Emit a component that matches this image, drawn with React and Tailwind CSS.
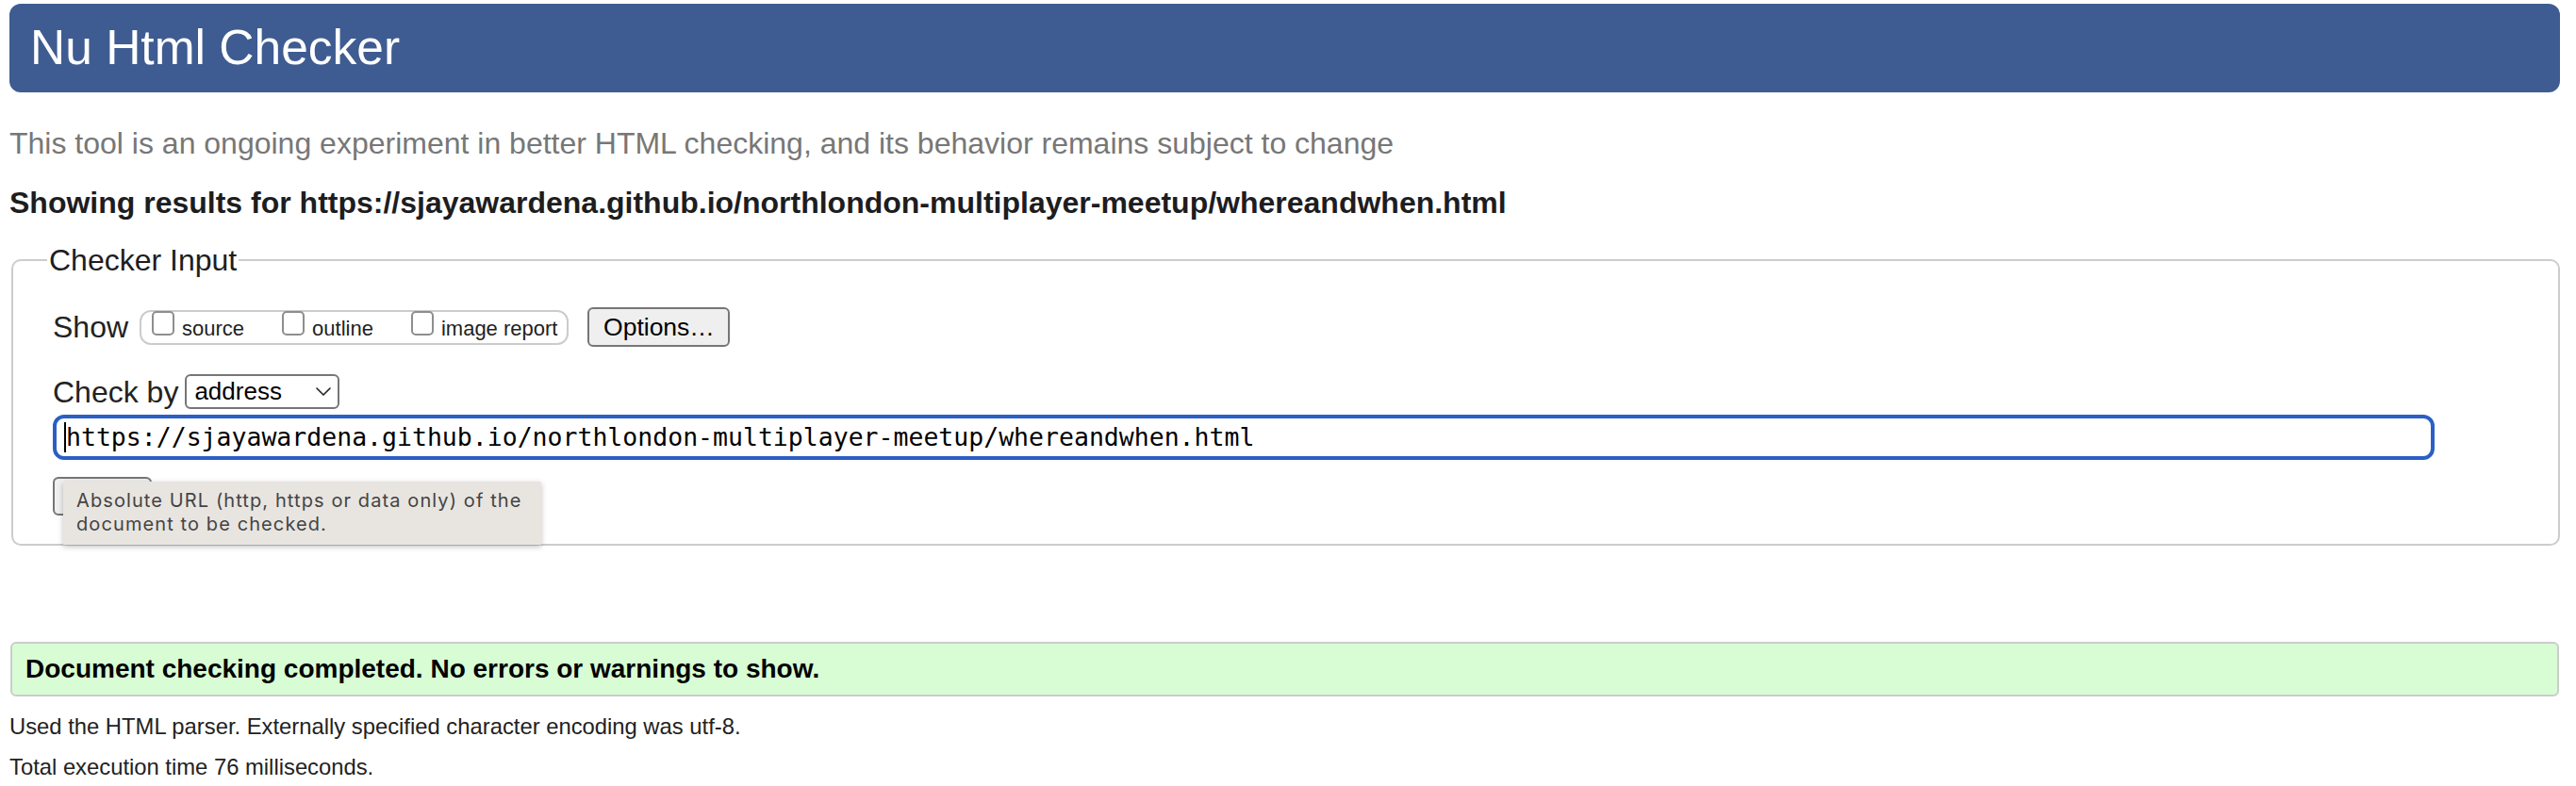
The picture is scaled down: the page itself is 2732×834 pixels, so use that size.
import React from 'react';

const sans = "font-['Liberation_Sans',Arial,Helvetica,sans-serif]";

const Checkbox = ({ label }) => (
  <label className="flex items-baseline gap-[8px] -mt-[1px]">
    <input
      type="checkbox"
      className="appearance-none w-[24px] h-[26px] border-2 border-[#8e8e8e] rounded-[5px] bg-white"
    />
    <span className="text-[22px] leading-[26px] text-[#222]">{label}</span>
  </label>
);

const Chevron = () => (
  <svg width="16" height="9" viewBox="0 0 16 9" fill="none">
    <path d="M1 1l7 7 7-7" stroke="#222" strokeWidth="1.6" strokeLinecap="round" strokeLinejoin="round" />
  </svg>
);

export default function App() {
  return (
    <div className={`${sans} bg-white min-h-[834px] pl-[10px] pr-[17px] text-[#222]`}>
      <header className="mt-[4px] h-[94px] rounded-[12px] bg-[#3e5c91] flex items-center pl-[22px]">
        <h1 className="text-[51.5px] text-white">Nu Html Checker</h1>
      </header>

      <p className="mt-[36px] text-[32px] leading-[36px] text-[#777]">
        This tool is an ongoing experiment in better HTML checking, and its behavior remains subject to change
      </p>
      <p className="mt-[27px] text-[32px] leading-[36px] font-bold text-[#1d1d1f]">
        Showing results for https://sjayawardena.github.io/northlondon-multiplayer-meetup/whereandwhen.html
      </p>

      <fieldset className="mt-[25px] ml-[2px] border-2 border-[#cccccc] rounded-[10px] pl-[42px] pt-[32px] pb-[30px]">
        <legend className="-ml-[6px] px-[2px] text-[32px] leading-[36px] text-[#1d1d1f]">Checker Input</legend>

        <div className="flex items-center">
          <span className="text-[32px] leading-[36px]">Show</span>
          <div className="ml-[12px] h-[37px] flex items-start gap-[40px] border-2 border-[#cccccc] rounded-[12px] pl-[11px] pr-[10px]">
            <Checkbox label="source" />
            <Checkbox label="outline" />
            <Checkbox label="image report" />
          </div>
          <button className="ml-[20px] w-[151px] h-[42px] bg-[#efefef] border-2 border-[#767676] rounded-[6px] text-[26.5px] text-black">
            Options…
          </button>
        </div>

        <div className="mt-[29px] flex items-center">
          <span className="text-[32px] leading-[36px]">Check by</span>
          <div className="ml-[7px] w-[164px] h-[37px] flex items-center justify-between border-2 border-[#767676] rounded-[6px] bg-white pl-[8px] pr-[7px]">
            <span className="text-[26px] text-black">address</span>
            <Chevron />
          </div>
        </div>

        <div className="mt-[6px] mr-[131px] h-[48px] flex items-center border-4 border-[#2b5fc5] rounded-[12px] pl-[8px] font-['DejaVu_Sans_Mono',Menlo,monospace] text-[26.5px] text-black">
          <span className="w-[2px] h-[32px] bg-black -mr-[1px]" />
          <span className="pl-[1px]">https://sjayawardena.github.io/northlondon-multiplayer-meetup/whereandwhen.html</span>
        </div>

        <div className="relative mt-[18px]">
          <button className="w-[105px] h-[41px] bg-[#efefef] border-2 border-[#767676] rounded-[6px] text-[26.5px] text-black">
            Check
          </button>
          <div className="absolute left-[11px] top-[5px] w-[507px] h-[67px] bg-[#e8e5e0] shadow-[0_2px_6px_rgba(0,0,0,0.25)] pl-[14px] pt-[8px] font-['Inter',sans-serif] text-[20px] leading-[25px] tracking-[1.1px] text-[#444]">
            <div>Absolute URL (http, https or data only) of the</div>
            <div>document to be checked.</div>
          </div>
        </div>
      </fieldset>

      <div className="mt-[102px] mx-[1px] h-[58px] flex items-center border-2 border-[#cccccc] rounded-[6px] bg-[#d8fdd4] pl-[14px]">
        <span className="text-[28px] font-bold text-black">
          Document checking completed. No errors or warnings to show.
        </span>
      </div>

      <div className="mt-[14px] text-[23.8px] leading-[35px] text-[#222]">
        <p>Used the HTML parser. Externally specified character encoding was utf-8.</p>
        <p className="mt-[8px]">Total execution time 76 milliseconds.</p>
      </div>
    </div>
  );
}
